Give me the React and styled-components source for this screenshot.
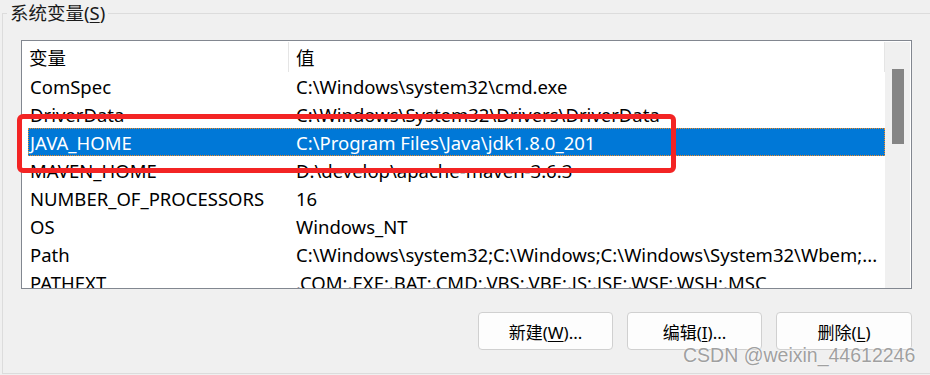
import React from "react";
import styled, { createGlobalStyle } from "styled-components";

const GlobalStyle = createGlobalStyle`
  body {
    margin: 0;
    background: #f0f0f0;
    overflow: hidden;
  }
`;

const FONT = `"Noto Sans", "Noto Sans CJK SC", sans-serif`;

const rows = [
  { name: "ComSpec", value: "C:\\Windows\\system32\\cmd.exe" },
  { name: "DriverData", value: "C:\\Windows\\System32\\Drivers\\DriverData" },
  { name: "JAVA_HOME", value: "C:\\Program Files\\Java\\jdk1.8.0_201", selected: true },
  { name: "MAVEN_HOME", value: "D:\\develop\\apache-maven-3.6.3" },
  { name: "NUMBER_OF_PROCESSORS", value: "16" },
  { name: "OS", value: "Windows_NT" },
  {
    name: "Path",
    value: "C:\\Windows\\system32;C:\\Windows;C:\\Windows\\System32\\Wbem;...",
  },
  { name: "PATHEXT", value: ".COM;.EXE;.BAT;.CMD;.VBS;.VBE;.JS;.JSE;.WSF;.WSH;.MSC" },
];

const Page = styled.div`
  position: relative;
  width: 930px;
  height: 375px;
  overflow: hidden;
  font-family: ${FONT};
  color: #000;
`;

const GroupBox = styled.fieldset`
  box-sizing: border-box;
  margin: 0 0 0 2px;
  padding: 14px 0 0 18px;
  width: 960px;
  height: 374px;
  border: 1px solid #dcdcdc;
  border-right: none;
`;

const Legend = styled.legend`
  margin-left: -14px;
  padding: 0 3px;
  font-size: 18.5px;
  line-height: 26px;
  color: #1a1a1a;
`;

const Key = styled.span`
  text-decoration: underline;
  text-underline-offset: 2px;
  text-decoration-thickness: 1px;
`;

const ListBox = styled.div`
  box-sizing: border-box;
  display: flex;
  width: 891px;
  height: 249px;
  border: 1px solid #828790;
  background: #fff;
  overflow: hidden;
`;

const ListMain = styled.div`
  flex: 1;
  overflow: hidden;
`;

const Columns = styled.div`
  display: grid;
  grid-template-columns: 260px 1fr;
  margin-left: 6px;
  height: ${(p) => p.$h}px;
  align-items: center;
  font-size: 18.5px;
  white-space: nowrap;
`;

const HeaderRow = styled(Columns)`
  border-right: 1px solid #e5e5e5;
  margin-top: 1px;
`;

const HeadCell = styled.div`
  height: 100%;
  display: flex;
  align-items: center;
  padding-left: ${(p) => p.$pad}px;
  border-left: ${(p) => (p.$sep ? "1px solid #e5e5e5" : "none")};
`;

const Row = styled(Columns)`
  box-sizing: border-box;
  background: ${(p) => (p.$selected ? "#0078d7" : "transparent")};
  color: ${(p) => (p.$selected ? "#fff" : "#000")};
  outline: ${(p) => (p.$selected ? "1px dotted #f08a24" : "none")};
  outline-offset: -1px;
`;

const Cell = styled.div`
  padding-left: ${(p) => p.$pad}px;
  overflow: hidden;
`;

const ScrollBar = styled.div`
  box-sizing: border-box;
  width: 26px;
  margin: 1px 0 0;
  padding: 27px 7px 0 7px;
  background: #f0f0f0;
  border-right: 1px solid #fff;
`;

const Thumb = styled.div`
  width: 12px;
  height: 75px;
  background: #858585;
`;

const ButtonBar = styled.div`
  display: flex;
  justify-content: flex-end;
  gap: 14px;
  width: 891px;
  margin-top: 23px;
`;

const Button = styled.button`
  box-sizing: border-box;
  width: ${(p) => p.$w || 135}px;
  height: 38px;
  border: 1px solid #d0d0d0;
  border-radius: 4px;
  background: #fdfdfd;
  font-family: ${FONT};
  font-size: 17px;
  color: #000;
  padding: 0;
`;

const Highlight = styled.div`
  position: absolute;
  left: 17px;
  top: 114px;
  width: 659px;
  height: 59px;
  box-sizing: border-box;
  border: 5px solid #f32424;
  border-radius: 6px;
  pointer-events: none;
`;

const Watermark = styled.div`
  position: absolute;
  left: 683px;
  top: 343px;
  font-family: "Liberation Sans", Arial, sans-serif;
  font-size: 19.5px;
  line-height: 24px;
  color: #a0a0a0;
  text-shadow: 0 0 2px #fff, 0 0 1px #fff;
  white-space: nowrap;
`;

export default function App() {
  return (
    <Page>
      <GlobalStyle />
      <GroupBox>
        <Legend>
          系统变量(<Key>S</Key>)
        </Legend>
        <ListBox>
          <ListMain>
            <HeaderRow $h={30}>
              <HeadCell $pad={1}>变量</HeadCell>
              <HeadCell $pad={7} $sep>
                值
              </HeadCell>
            </HeaderRow>
            {rows.map((r) => (
              <Row key={r.name} $h={28} $selected={r.selected}>
                <Cell $pad={2}>{r.name}</Cell>
                <Cell $pad={8}>{r.value}</Cell>
              </Row>
            ))}
          </ListMain>
          <ScrollBar>
            <Thumb />
          </ScrollBar>
        </ListBox>
        <ButtonBar>
          <Button>
            新建(<Key>W</Key>)...
          </Button>
          <Button>
            编辑(<Key>I</Key>)...
          </Button>
          <Button $w={136}>
            删除(<Key>L</Key>)
          </Button>
        </ButtonBar>
      </GroupBox>
      <Highlight />
      <Watermark>CSDN @weixin_44612246</Watermark>
    </Page>
  );
}
